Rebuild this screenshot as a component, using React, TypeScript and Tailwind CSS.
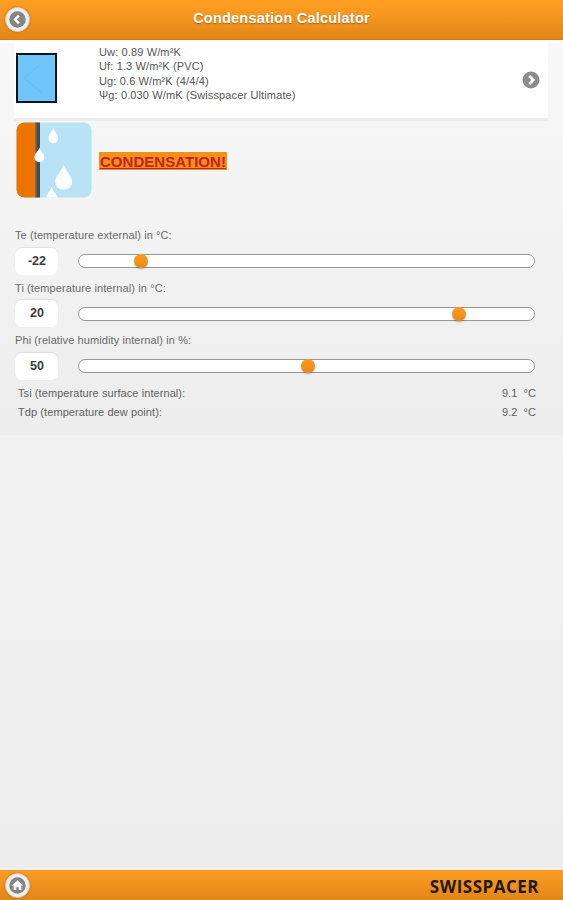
import React from "react";

type Control = { label: string; value: string; percent: number };

const controls: Control[] = [
  { label: "Te (temperature external) in °C:", value: "-22", percent: 13.7 },
  { label: "Ti (temperature internal) in °C:", value: "20", percent: 83.6 },
  { label: "Phi (relative humidity internal) in %:", value: "50", percent: 50.4 },
];

const results = [
  { label: "Tsi (temperature surface internal):", value: "9.1" },
  { label: "Tdp (temperature dew point):", value: "9.2" },
];

function RoundButton({ children, label }: { children: React.ReactNode; label: string }) {
  return (
    <button
      aria-label={label}
      className="flex size-[25px] items-center justify-center rounded-full border border-[#d5cfc6] bg-[#eeeeee] shadow-[0_0_2px_rgba(120,70,0,0.5)]"
    >
      <svg viewBox="0 0 18 18" className="size-[17px] shrink-0">
        <circle cx="9" cy="9" r="8.7" fill="#858585" />
        {children}
      </svg>
    </button>
  );
}

function CondensationIcon() {
  return (
    <svg viewBox="0 0 76 76" className="size-[76px] shrink-0">
      <defs>
        <clipPath id="tile">
          <rect x="0.5" y="0.5" width="75" height="75" rx="8" />
        </clipPath>
      </defs>
      <g clipPath="url(#tile)">
        <rect width="76" height="76" fill="#b9e2f6" />
        <rect width="20" height="76" fill="#ec7500" />
        <rect x="19" width="2" height="76" fill="#8b6a55" />
        <rect x="20.5" width="3.5" height="76" fill="#444b57" />
        <g fill="#ffffff">
          <path d="M37.3 6C38.5 10 42.2 12.5 42.2 16.2a4.9 4.9 0 0 1-9.8 0C32.4 12.500 36 10 37.300 6Z" />
          <path d="M23.500 25.500C24.500 29.500 28.400 31.500 28.400 35.300a5 5 0 0 1-10 0C18.400 31.500 22.500 29.500 23.500 25.500Z" />
          <path d="M47.700 43C50 49.500 56.200 54 56.200 60a8.500 7.800 0 0 1-17 0C39.200 54 45.500 49.500 47.700 43Z" />
          <path d="M35.700 64.500C37 69.500 42 73 43 80H28.500C29.500 73 34.500 69.500 35.700 64.500Z" />
        </g>
      </g>
    </svg>
  );
}

function Slider({ control }: { control: Control }) {
  return (
    <div className="h-[52.5px]">
      <div className="h-[19px] whitespace-nowrap text-[11px] leading-[14px] tracking-[0.1px] text-[#696969]">
        {control.label}
      </div>
      <div className="flex h-[28px] items-center">
        <div className="flex h-[27px] w-[43px] items-center justify-center rounded-[7px] bg-white pl-px text-[12.500px] font-bold text-[#3c3c3c] shadow-[0_-1px_1px_rgba(0,0,0,0.08)]">
          {control.value}
        </div>
        <div className="relative ml-5 h-[14px] w-[457px] rounded-full border border-[#969696] bg-white">
          <div
            className="absolute top-1/2 size-[14px] -translate-x-1/2 -translate-y-1/2 rounded-full bg-gradient-to-b from-[#f99d20] to-[#ea8917] shadow-[0_1px_2px_rgba(0,0,0,0.3)]"
            style={{ left: `${control.percent}%` }}
          />
        </div>
      </div>
    </div>
  );
}

export default function App() {
  return (
    <div className="flex h-[900px] w-[563px] flex-col overflow-hidden bg-gradient-to-b from-[#f6f6f6] to-[#ededed] font-['Liberation_Sans',Arial,sans-serif]">
      <header className="grid h-[39.5px] shrink-0 grid-cols-[1fr_auto_1fr] items-center border-b border-[#d87a0b] bg-gradient-to-b from-[#ffa024] to-[#e38619] px-[4.5px]">
        <RoundButton label="Back">
          <path d="M10.500 5 6.500 9l4 4" fill="none" stroke="white" strokeWidth="2.600" />
        </RoundButton>
        <h1 className="pb-[2px] text-[14.500px] font-bold leading-[18px] tracking-[0.22px] text-white [text-shadow:0_1px_1px_rgba(100,50,0,0.45)]">
          Condensation Calculator
        </h1>
      </header>

      <main className="h-[395px] shrink-0 bg-gradient-to-b from-[#f8f8f8] to-[#ededed]">
        <div className="h-[3.500px] bg-[#fdfdfd]" />
        <section className="ml-[14px] flex h-[78px] w-[534px] items-start border-b-[3px] border-[#ececec] bg-white">
          <div className="ml-[2px] mt-[10px] h-[50px] w-[41px] shrink-0 border-2 border-[#07121c] bg-[#6fc4fa]">
            <svg viewBox="0 0 37 46" className="size-full" fill="none" stroke="#62b8f0" strokeWidth="0.700">
              <path d="M22 10 6 23l18 15" />
            </svg>
          </div>
          <div className="ml-[42px] mt-[1.500px] whitespace-nowrap text-[11px] leading-[14.500px] tracking-[0.130px] text-[#555555]">
            <div>Uw: 0.89 W/m²K</div>
            <div>Uf: 1.3 W/m²K (PVC)</div>
            <div>Ug: 0.6 W/m²K (4/4/4)</div>
            <div>Ψg: 0.030 W/mK (Swisspacer Ultimate)</div>
          </div>
          <svg viewBox="0 0 18 18" className="ml-auto mr-[8px] mt-[28px] size-[18px] shrink-0">
            <circle cx="9" cy="9" r="8.500" fill="#8c8c8c" />
            <path d="m7.200 5 4 4-4 4" fill="none" stroke="white" strokeWidth="2.600" />
          </svg>
        </section>

        <section className="flex h-[77px] items-center pl-[16px]">
          <CondensationIcon />
          <strong className="ml-[7px] mt-[2px] flex h-[18px] w-[128px] items-center whitespace-nowrap bg-[#f39117] pl-px pt-px text-[15px] font-bold leading-[17px] tracking-[0.030px] text-[#c41f2c] underline decoration-1 underline-offset-1">
            CONDENSATION!
          </strong>
        </section>

        <section className="mt-[30px] pl-[15px]">
          {controls.map((control) => (
            <Slider key={control.label} control={control} />
          ))}
        </section>

        <section className="-mt-[1.500px] ml-[18px] w-[518px] text-[11px] leading-[18.500px] tracking-[0.080px] text-[#606060]">
          {results.map((result) => (
            <div key={result.label} className="flex justify-between">
              <span>{result.label}</span>
              <span className="flex gap-[6px]">
                <span>{result.value}</span>
                <span>°C</span>
              </span>
            </div>
          ))}
        </section>
      </main>

      <footer className="mt-auto flex h-[30px] shrink-0 items-center justify-between border-t border-[#ef9a28] bg-gradient-to-b from-[#fb9c22] to-[#e38619] pl-[4.5px] pr-[24px]">
        <RoundButton label="Home">
          <path d="m9 3.500-6 5.500h1.900v4.800h2.800v-3h2.600v3h2.800V9H15Z" fill="white" />
        </RoundButton>
        <span className="pt-[3px] font-['Open_Sans',sans-serif] text-[17px] font-bold leading-[20px] tracking-[0.500px] text-[#211a12]">
          SWISSPACER
        </span>
      </footer>
    </div>
  );
}
